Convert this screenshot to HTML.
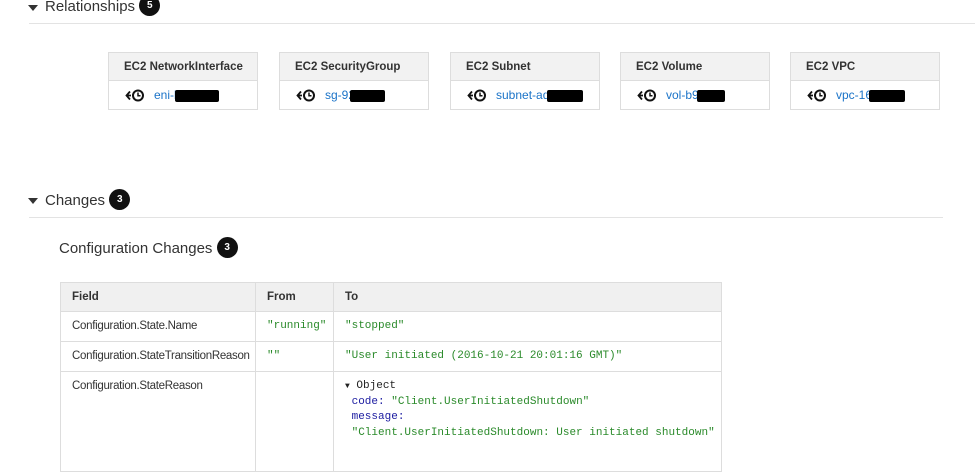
<!DOCTYPE html>
<html><head><style>
*{margin:0;padding:0;box-sizing:border-box}
body{width:975px;height:444px;overflow:hidden;background:#fff;font-family:"Liberation Sans",Arial,sans-serif;color:#333;position:relative}
.a{position:absolute}
.h{font-size:15px;color:#333;white-space:nowrap}
.tri{width:0;height:0;border-left:5px solid transparent;border-right:5px solid transparent;border-top:6px solid #333}
.badge{display:inline-block;width:21px;height:21px;border-radius:50%;background:#111;color:#fff;font-size:10px;font-weight:bold;text-align:center;line-height:21px;vertical-align:middle}
.box{position:absolute;top:52px;width:150px;height:58px;border:1px solid #ddd}
.box .hd{height:28px;background:#f2f2f2;border-bottom:1px solid #ddd;font-size:11.5px;font-weight:bold;padding-left:15px;line-height:28px;white-space:nowrap;overflow:hidden}
.box .bd{height:28px;font-size:12px;color:#1a73c8;position:relative;line-height:28px}
.ic{position:absolute;left:16px;top:8px}
.lk{position:absolute;left:45px}
.red{position:absolute;top:9px;height:12px;background:#000;border-radius:2px}
table{position:absolute;left:60px;top:282px;width:662px;border-collapse:collapse;font-size:11.5px;table-layout:fixed}
td,th{border:1px solid #ddd;text-align:left;vertical-align:top;padding:0 11px;white-space:nowrap;overflow:visible}
th{background:#f0f0f0;height:29px;font-weight:bold;line-height:28px}
td{height:29px;line-height:29px}
.c1{letter-spacing:-0.3px}
.m{font-family:"Liberation Mono",monospace;font-size:11px;color:#2a8a2a}
.k{color:#1a1aa0}
</style></head><body>
<div class="a tri" style="left:28px;top:5px"></div>
<div class="a h" style="left:45px;top:-2px">Relationships <span class="badge" style="margin-top:-4px">5</span></div>
<div class="a" style="left:29px;top:23px;width:946px;height:1px;background:#e3e3e3"></div>

<div class="box" style="left:108px"><div class="hd">EC2 NetworkInterface</div><div class="bd"><svg class="ic" width="20" height="13" viewBox="0 0 20 13"><path d="M5 2.5L1.5 6.5L5 10.5M1.5 6.5H6" stroke="#111" stroke-width="1.8" fill="none"/><circle cx="13" cy="6.5" r="5" stroke="#111" stroke-width="2" fill="none"/><path d="M13 3.5V6.8H15.5" stroke="#111" stroke-width="1.5" fill="none"/></svg><span class="lk">eni-b</span><div class="red" style="left:66px;width:44px"></div></div></div>
<div class="box" style="left:279px"><div class="hd">EC2 SecurityGroup</div><div class="bd"><svg class="ic" width="20" height="13" viewBox="0 0 20 13"><path d="M5 2.5L1.5 6.5L5 10.5M1.5 6.5H6" stroke="#111" stroke-width="1.8" fill="none"/><circle cx="13" cy="6.5" r="5" stroke="#111" stroke-width="2" fill="none"/><path d="M13 3.5V6.8H15.5" stroke="#111" stroke-width="1.5" fill="none"/></svg><span class="lk">sg-92</span><div class="red" style="left:70px;width:35px"></div></div></div>
<div class="box" style="left:450px"><div class="hd">EC2 Subnet</div><div class="bd"><svg class="ic" width="20" height="13" viewBox="0 0 20 13"><path d="M5 2.5L1.5 6.5L5 10.5M1.5 6.5H6" stroke="#111" stroke-width="1.8" fill="none"/><circle cx="13" cy="6.5" r="5" stroke="#111" stroke-width="2" fill="none"/><path d="M13 3.5V6.8H15.5" stroke="#111" stroke-width="1.5" fill="none"/></svg><span class="lk">subnet-ad</span><div class="red" style="left:96px;width:36px"></div></div></div>
<div class="box" style="left:620px"><div class="hd">EC2 Volume</div><div class="bd"><svg class="ic" width="20" height="13" viewBox="0 0 20 13"><path d="M5 2.5L1.5 6.5L5 10.5M1.5 6.5H6" stroke="#111" stroke-width="1.8" fill="none"/><circle cx="13" cy="6.5" r="5" stroke="#111" stroke-width="2" fill="none"/><path d="M13 3.5V6.8H15.5" stroke="#111" stroke-width="1.5" fill="none"/></svg><span class="lk">vol-b9</span><span class="lk" style="left:100px">f</span><div class="red" style="left:76px;width:28px"></div></div></div>
<div class="box" style="left:790px"><div class="hd">EC2 VPC</div><div class="bd"><svg class="ic" width="20" height="13" viewBox="0 0 20 13"><path d="M5 2.5L1.5 6.5L5 10.5M1.5 6.5H6" stroke="#111" stroke-width="1.8" fill="none"/><circle cx="13" cy="6.5" r="5" stroke="#111" stroke-width="2" fill="none"/><path d="M13 3.5V6.8H15.5" stroke="#111" stroke-width="1.5" fill="none"/></svg><span class="lk">vpc-16</span><div class="red" style="left:78px;width:36px"></div></div></div>

<div class="a tri" style="left:28px;top:198px"></div>
<div class="a h" style="left:45px;top:192px">Changes <span class="badge" style="margin-top:-4px">3</span></div>
<div class="a" style="left:29px;top:217px;width:914px;height:1px;background:#e3e3e3"></div>
<div class="a h" style="left:59px;top:240px">Configuration Changes <span class="badge" style="margin-top:-4px">3</span></div>

<table>
<colgroup><col style="width:195px"><col style="width:78px"><col></colgroup>
<tr><th>Field</th><th>From</th><th>To</th></tr>
<tr><td class="c1">Configuration.State.Name</td><td class="m">"running"</td><td class="m">"stopped"</td></tr>
<tr><td class="c1">Configuration.StateTransitionReason</td><td class="m">""</td><td class="m">"User initiated (2016-10-21 20:01:16 GMT)"</td></tr>
<tr><td class="c1" style="height:100px">Configuration.StateReason</td><td></td><td class="m" style="line-height:15.5px;padding-top:7px;color:#222"><span style="font-size:8px">▼</span> Object<br>&nbsp;<span class="k">code:</span> <span style="color:#2a8a2a">"Client.UserInitiatedShutdown"</span><br>&nbsp;<span class="k">message:</span><br>&nbsp;<span style="color:#2a8a2a">"Client.UserInitiatedShutdown: User initiated shutdown"</span></td></tr>
</table>
</body></html>
